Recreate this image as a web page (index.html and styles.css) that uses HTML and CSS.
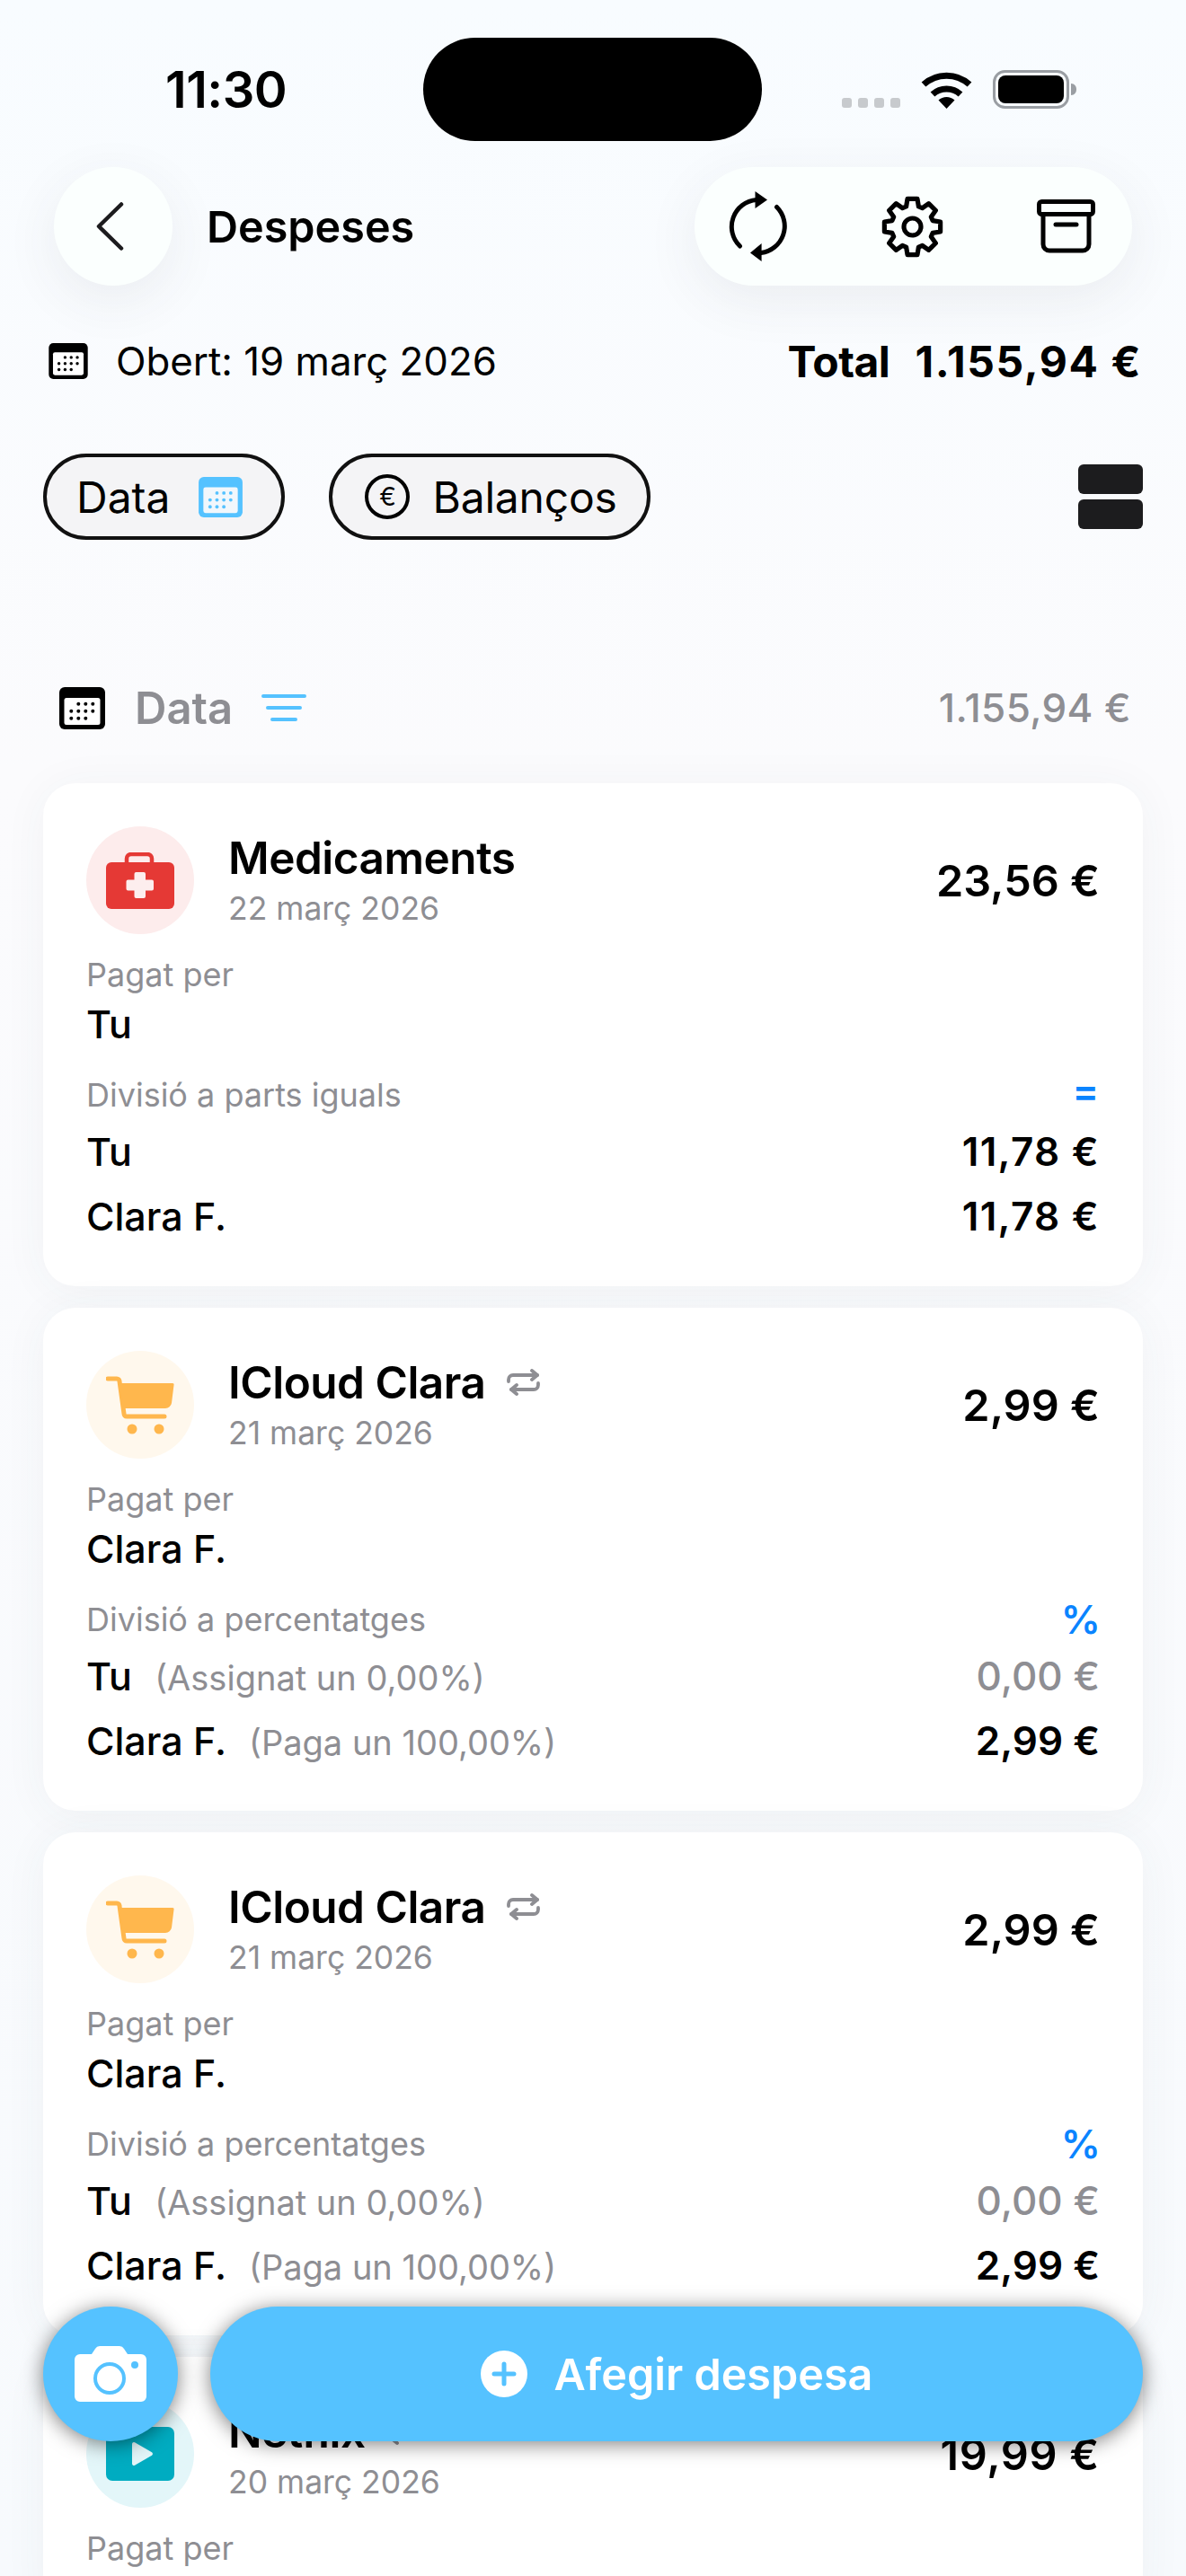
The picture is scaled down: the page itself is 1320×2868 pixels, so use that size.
FILE: index.html
```html
<!DOCTYPE html>
<html lang="ca">
<head>
  <meta charset="UTF-8" />
  <meta name="viewport" content="width=device-width, initial-scale=1.0"/>
  <title>Despeses</title>
  <link rel="stylesheet" href="styles.css">
</head>
<body>

<svg class="defs" width="0" height="0">
  <symbol id="cal" viewBox="0 0 51 47">
    <rect width="51" height="47" rx="6" fill="currentColor"/>
    <rect x="5.5" y="12" width="40" height="30" rx="2.5" fill="var(--panel)"/>
    <g fill="currentColor">
      <circle cx="21.3" cy="18.7" r="2"/><circle cx="29.3" cy="18.7" r="2"/><circle cx="37.3" cy="18.7" r="2"/>
      <circle cx="13.3" cy="26.7" r="2"/><circle cx="21.3" cy="26.7" r="2"/><circle cx="29.3" cy="26.7" r="2"/><circle cx="37.3" cy="26.7" r="2"/>
      <circle cx="13.3" cy="34.7" r="2"/><circle cx="21.3" cy="34.7" r="2"/><circle cx="29.3" cy="34.7" r="2"/>
    </g>
  </symbol>
  <symbol id="repeat" viewBox="0 0 39 30">
    <g fill="none" stroke="#8e8e93" stroke-width="3.800" stroke-linecap="round" stroke-linejoin="round">
      <path d="M3 14v-2a5 5 0 0 1 5-5h27"/>
      <path d="M29 2l6 5l-6 5"/>
      <path d="M36 16v2a5 5 0 0 1-5 5H6"/>
      <path d="M12 18l-6 5l6 5"/>
    </g>
  </symbol>
  <symbol id="cart" viewBox="0 0 76 65">
    <path d="M2 3h10a3 3 0 0 1 3 3l5 36a3 3 0 0 0 3 3h42" fill="none" stroke="#ffb74d" stroke-width="5" stroke-linecap="round" stroke-linejoin="round"/>
    <path d="M15 8h59a1.500 1.500 0 0 1 1.500 2l-2.500 20a7 7 0 0 1-7 6H20z" fill="#ffb74d"/>
    <circle cx="29" cy="59" r="5.500" fill="#ffb74d"/>
    <circle cx="59" cy="59" r="5.500" fill="#ffb74d"/>
  </symbol>
</svg>

<div class="screen">

  <div class="statusbar">
    <span class="time">11:30</span>
    <div class="island"></div>
    <div class="status-icons">
      <div class="signal"><i></i><i></i><i></i><i></i></div>
      <svg class="wifi" viewBox="0 0 57 42">
        <g fill="none" stroke="#000" stroke-width="7">
          <path d="M3 15 A 38 38 0 0 1 54 15"/>
          <path d="M13 26 A 23 23 0 0 1 44 26"/>
        </g>
        <path d="M28.500 42L19.500 32.500A 13 13 0 0 1 37.500 32.500Z" fill="#000"/>
      </svg>
      <svg class="battery" viewBox="0 0 93 43">
        <rect x="1.500" y="1.500" width="82" height="40" rx="12" fill="none" stroke="#9a9ea3" stroke-width="3"/>
        <rect x="6" y="6" width="73" height="31" rx="8" fill="#000"/>
        <path d="M87 15c4 0 6 3 6 6.500s-2 6.500-6 6.500z" fill="#9a9ea3"/>
      </svg>
    </div>
  </div>

  <header class="topbar">
    <button class="back">
      <svg viewBox="0 0 31 54" width="31" height="54"><path d="M28 2.500L3 27l25 24.500" fill="none" stroke="#1c1c1e" stroke-width="4.500" stroke-linecap="round" stroke-linejoin="round"/></svg>
    </button>
    <h1>Despeses</h1>
    <div class="actions">
      <svg viewBox="0 0 66 78" width="66" height="78">
        <g fill="none" stroke="#000" stroke-width="5" stroke-linecap="round">
          <path d="M12.500 61A30 30 0 0 1 31 9.500"/>
          <path d="M53.500 17.500A30 30 0 0 1 36 68.500"/>
        </g>
        <path d="M29.500 0L43 9.500L29.500 19zM24 68.600L36.600 58V78z" fill="#000"/>
      </svg>
      <svg viewBox="0 0 24 24" width="69" height="69">
        <path d="M9.600 4.160L10.090 1.170H13.910L14.400 4.160L15.850 4.760L18.310 2.990L21.010 5.690L19.240 8.150L19.840 9.600L22.830 10.090V13.910L19.840 14.400L19.240 15.850L21.010 18.310L18.310 21.010L15.850 19.240L14.400 19.840L13.910 22.830H10.090L9.600 19.840L8.150 19.240L5.690 21.010L2.990 18.310L4.760 15.850L4.160 14.400L1.170 13.910V10.090L4.160 9.600L4.760 8.150L2.990 5.690L5.690 2.990L8.150 4.760Z" fill="none" stroke="#000" stroke-width="1.800" stroke-linejoin="round"/>
        <circle cx="12" cy="12" r="3.300" fill="none" stroke="#000" stroke-width="1.800"/>
      </svg>
      <svg viewBox="0 0 65 60" width="65" height="60">
        <g fill="none" stroke="#000" stroke-width="5" stroke-linecap="round" stroke-linejoin="round">
          <rect x="2.500" y="2.500" width="60" height="14" rx="3"/>
          <path d="M7 17v33a7 7 0 0 0 7 7h37a7 7 0 0 0 7-7V17"/>
          <path d="M21 28h23"/>
        </g>
      </svg>
    </div>
  </header>

  <div class="summary">
    <div class="opened">
      <svg class="cal-black" width="44" height="40"><use href="#cal"/></svg>
      <span>Obert: 19 març 2026</span>
    </div>
    <div class="total"><span>Total</span><span class="total-value">1.155,94 €</span></div>
  </div>

  <div class="toolbar">
    <div class="chip chip-date">
      <span>Data</span>
      <svg class="cal-blue" width="49" height="45"><use href="#cal"/></svg>
    </div>
    <div class="chip chip-balance">
      <span class="euro">€</span>
      <span>Balanços</span>
    </div>
    <div class="layout-toggle"><i></i><i></i></div>
  </div>

  <div class="section">
    <svg class="cal-black" width="51" height="47"><use href="#cal"/></svg>
    <span class="section-title">Data</span>
    <svg class="filter" viewBox="0 0 50 32" width="50" height="32">
      <path d="M2 3h46M7 16h36M12 29h26" fill="none" stroke="#55c2ff" stroke-width="4" stroke-linecap="round"/>
    </svg>
    <span class="section-total">1.155,94 €</span>
  </div>

  <div class="cards">

    <article class="card">
      <div class="card-head">
        <div class="avatar avatar-red">
          <svg viewBox="0 0 76 63" width="76" height="63">
            <path d="M23 14V7a5 5 0 0 1 5-5h18a5 5 0 0 1 5 5v7" fill="none" stroke="#e53935" stroke-width="4.500"/>
            <rect y="11" width="76" height="52" rx="6" fill="#e53935"/>
            <path d="M31.500 24a2 2 0 0 1 2-2h8.500a2 2 0 0 1 2 2v6.500h7a2 2 0 0 1 2 2v8a2 2 0 0 1-2 2h-7v6.500a2 2 0 0 1-2 2h-8.500a2 2 0 0 1-2-2v-6.500h-7a2 2 0 0 1-2-2v-8a2 2 0 0 1 2-2h7z" fill="#fdeeee"/>
          </svg>
        </div>
        <div class="card-info">
          <div class="card-title">Medicaments</div>
          <div class="card-date">22 març 2026</div>
        </div>
        <div class="card-amount">23,56 €</div>
      </div>
      <div class="label">Pagat per</div>
      <div class="payer">Tu</div>
      <div class="label-row label"><span>Divisió a parts iguals</span><span class="mode mode-equal">=</span></div>
      <div class="split"><span>Tu</span><strong class="spaced">11,78 €</strong></div>
      <div class="split split-next"><span>Clara F.</span><strong class="spaced">11,78 €</strong></div>
    </article>

    <article class="card">
      <div class="card-head">
        <div class="avatar avatar-orange"><svg width="76" height="65"><use href="#cart"/></svg></div>
        <div class="card-info">
          <div class="card-title">ICloud Clara <svg class="repeat" width="39" height="30"><use href="#repeat"/></svg></div>
          <div class="card-date">21 març 2026</div>
        </div>
        <div class="card-amount">2,99 €</div>
      </div>
      <div class="label">Pagat per</div>
      <div class="payer">Clara F.</div>
      <div class="label-row label"><span>Divisió a percentatges</span><span class="mode">%</span></div>
      <div class="split"><span>Tu <em>(Assignat un 0,00%)</em></span><strong class="zero">0,00 €</strong></div>
      <div class="split split-next"><span>Clara F. <em>(Paga un 100,00%)</em></span><strong>2,99 €</strong></div>
    </article>

    <article class="card">
      <div class="card-head">
        <div class="avatar avatar-orange"><svg width="76" height="65"><use href="#cart"/></svg></div>
        <div class="card-info">
          <div class="card-title">ICloud Clara <svg class="repeat" width="39" height="30"><use href="#repeat"/></svg></div>
          <div class="card-date">21 març 2026</div>
        </div>
        <div class="card-amount">2,99 €</div>
      </div>
      <div class="label">Pagat per</div>
      <div class="payer">Clara F.</div>
      <div class="label-row label"><span>Divisió a percentatges</span><span class="mode">%</span></div>
      <div class="split"><span>Tu <em>(Assignat un 0,00%)</em></span><strong class="zero">0,00 €</strong></div>
      <div class="split split-next"><span>Clara F. <em>(Paga un 100,00%)</em></span><strong>2,99 €</strong></div>
    </article>

    <article class="card">
      <div class="card-head">
        <div class="avatar avatar-teal">
          <svg viewBox="0 0 76 60" width="76" height="60">
            <rect width="76" height="60" rx="7" fill="#00acc1"/>
            <path d="M29 19a2 2 0 0 1 3-1.700l19 11a2 2 0 0 1 0 3.400l-19 11a2 2 0 0 1-3-1.700z" fill="#e3f6f9"/>
          </svg>
        </div>
        <div class="card-info">
          <div class="card-title">Netflix <svg class="repeat" width="39" height="30"><use href="#repeat"/></svg></div>
          <div class="card-date">20 març 2026</div>
        </div>
        <div class="card-amount spaced">19,99 €</div>
      </div>
      <div class="label">Pagat per</div>
    </article>

  </div>

  <div class="bottom-actions">
    <button class="camera">
      <svg viewBox="0 0 80 62" width="80" height="62">
        <path d="M6 9h13l4-6a6 6 0 0 1 5-3h22a6 6 0 0 1 5 3l4 6h15a6 6 0 0 1 6 6v41a6 6 0 0 1-6 6H6a6 6 0 0 1-6-6V15a6 6 0 0 1 6-6z" fill="#fff"/>
        <circle cx="39" cy="36" r="16" fill="none" stroke="#55c2ff" stroke-width="4"/>
        <circle cx="67" cy="21" r="4" fill="#55c2ff"/>
      </svg>
    </button>
    <button class="add">
      <svg viewBox="0 0 52 52" width="52" height="52">
        <circle cx="26" cy="26" r="26" fill="#fff"/>
        <path d="M26 15v22M15 26h22" stroke="#55c2ff" stroke-width="5" stroke-linecap="round"/>
      </svg>
      <span>Afegir despesa</span>
    </button>
  </div>

</div>

</body>
</html>
```

FILE: styles.css
```css
:root {
  --blau: #55c2ff;
  --gris: #8e8e93;
  --mode: #0a84ff;
}

body {
  margin: 0;
  font-family: Inter, 'Noto Sans', sans-serif;
  color: #000;
}

.defs {
  position: absolute;
}

.screen {
  position: relative;
  width: 1320px;
  height: 2868px;
  overflow: hidden;
  background: linear-gradient(#f8fcff, #fbfbfd 30%, #f7fafd);
}

/* status bar */
.statusbar {
  display: flex;
  align-items: center;
  height: 115px;
  padding-top: 42px;
}

.time {
  width: 471px;
  padding-left: 184px;
  box-sizing: border-box;
  font-size: 56px;
  font-weight: 600;
  letter-spacing: -0.5px;
}

.island {
  width: 377px;
  height: 115px;
  border-radius: 58px;
  background: #000;
}

.status-icons {
  display: flex;
  align-items: flex-end;
  margin-left: 89px;
  height: 43px;
}

.signal {
  display: flex;
  gap: 7px;
  margin-bottom: 1px;
}

.signal i {
  width: 11px;
  height: 11px;
  border-radius: 3px;
  background: #c7cacd;
}

.wifi {
  width: 57px;
  height: 42px;
  margin-left: 23px;
}

.battery {
  width: 93px;
  height: 43px;
  margin-left: 23px;
}

/* header */
.topbar {
  display: flex;
  align-items: center;
  margin-top: 29px;
  padding: 0 60px;
}

.back {
  display: flex;
  align-items: center;
  justify-content: center;
  width: 132px;
  height: 132px;
  padding: 0 8px 0 0;
  border: none;
  border-radius: 50%;
  background: #fbfffe;
  box-shadow: 0 16px 60px rgba(60, 70, 80, 0.08);
}

.topbar h1 {
  margin: 0 0 0 38px;
  font-size: 48.5px;
  font-weight: 600;
}

.actions {
  display: flex;
  align-items: center;
  justify-content: space-between;
  box-sizing: border-box;
  width: 487px;
  height: 132px;
  margin-left: auto;
  padding: 0 41px 0 38px;
  border-radius: 66px;
  background: #fbfffe;
  box-shadow: 0 16px 60px rgba(60, 70, 80, 0.08);
}

/* summary */
.summary {
  display: flex;
  align-items: center;
  justify-content: space-between;
  height: 60px;
  margin-top: 54px;
  padding: 0 49px 0 54px;
}

.opened {
  display: flex;
  align-items: center;
  gap: 31px;
  font-size: 43.8px;
}

.cal-black {
  color: #000;
  --panel: #fff;
}

.cal-blue {
  color: var(--blau);
  --panel: #f1f7fc;
}

.total {
  display: flex;
  gap: 28px;
  font-size: 48px;
  font-weight: 700;
  letter-spacing: -0.5px;
}

.total-value {
  letter-spacing: 1.6px;
}

/* chips */
.toolbar {
  display: flex;
  align-items: center;
  gap: 49px;
  margin-top: 73px;
  padding: 0 48px;
}

.chip {
  display: flex;
  align-items: center;
  box-sizing: border-box;
  height: 96px;
  border: 4px solid #111;
  border-radius: 48px;
  background: #f4f4f6;
  font-size: 48px;
}

.chip-date {
  gap: 32px;
  padding: 0 43px 0 33px;
}

.chip-balance {
  gap: 25px;
  padding: 0 33px 0 36px;
  letter-spacing: -0.2px;
}

.euro {
  display: flex;
  align-items: center;
  justify-content: center;
  box-sizing: border-box;
  width: 50px;
  height: 50px;
  border: 4px solid #000;
  border-radius: 50%;
  font-size: 28px;
}

.layout-toggle {
  display: flex;
  flex-direction: column;
  gap: 6px;
  margin-left: auto;
}

.layout-toggle i {
  display: block;
  width: 72px;
  height: 33px;
  border-radius: 6px;
  background: #1c1c1e;
}

/* section */
.section {
  display: flex;
  align-items: center;
  height: 60px;
  margin-top: 157px;
  padding: 0 61px 0 66px;
}

.section-title {
  margin-left: 33px;
  font-size: 49px;
  font-weight: 600;
  color: var(--gris);
}

.filter {
  margin-left: 32px;
}

.section-total {
  margin-left: auto;
  font-size: 44px;
  font-weight: 500;
  letter-spacing: 0.4px;
  color: var(--gris);
}

/* cards */
.cards {
  display: flex;
  flex-direction: column;
  gap: 24px;
  margin-top: 54px;
  padding: 0 48px;
}

.card {
  padding: 48px 51px 52px 48px;
  border-radius: 36px;
  background: #fff;
  box-shadow: 0 4px 50px rgba(60, 70, 80, 0.05);
}

.card-head {
  display: flex;
  align-items: center;
  height: 120px;
  margin-bottom: 23px;
}

.avatar {
  display: flex;
  align-items: center;
  justify-content: center;
  flex-shrink: 0;
  width: 120px;
  height: 120px;
  border-radius: 50%;
}

.avatar-red { background: #fdecec; }
.avatar-orange { background: #fff8ed; }
.avatar-teal { background: #e3f6f9; }

.card-info {
  margin-left: 38px;
}

.card-title {
  display: flex;
  align-items: center;
  gap: 23px;
  height: 60px;
  font-size: 49.5px;
  font-weight: 600;
  letter-spacing: -0.5px;
}

.card-date {
  height: 46px;
  margin-top: 4px;
  line-height: 46px;
  font-size: 35.5px;
  color: var(--gris);
}

.card-amount {
  margin-left: auto;
  margin-right: -3px;
  font-size: 48.6px;
  font-weight: 600;
}

.card-amount.spaced {
  letter-spacing: 0.7px;
}

.label {
  height: 44px;
  line-height: 44px;
  font-size: 36px;
  color: var(--gris);
}

.payer {
  height: 52px;
  margin-top: 7px;
  line-height: 52px;
  font-size: 43px;
  font-weight: 500;
}

.label-row {
  display: flex;
  justify-content: space-between;
  margin-top: 31px;
}

.mode {
  margin-right: -4px;
  font-size: 44px;
  font-weight: 600;
  color: var(--mode);
}

.mode-equal {
  margin-top: -5px;
  margin-right: -2px;
}

.split {
  display: flex;
  justify-content: space-between;
  height: 52px;
  margin-top: 15px;
  line-height: 52px;
  font-size: 43px;
  font-weight: 500;
}

.split-next {
  margin-top: 20px;
}

.split strong {
  margin-right: -3px;
  font-size: 44px;
  font-weight: 600;
}

.split .spaced {
  letter-spacing: 1.3px;
}

.split em {
  margin-left: 14px;
  font-size: 38px;
  font-style: normal;
  font-weight: 400;
  color: var(--gris);
}

.split .zero {
  font-weight: 500;
  color: var(--gris);
}

/* floating buttons */
.bottom-actions {
  position: absolute;
  left: 48px;
  right: 48px;
  bottom: 150px;
  display: flex;
  gap: 36px;
}

.camera {
  display: flex;
  align-items: center;
  justify-content: center;
  flex-shrink: 0;
  width: 150px;
  height: 150px;
  padding: 0;
  border: none;
  border-radius: 50%;
  background: var(--blau);
  box-shadow: 0 3px 22px rgba(0, 0, 0, 0.5);
}

.add {
  display: flex;
  flex: 1;
  align-items: center;
  justify-content: center;
  gap: 30px;
  height: 150px;
  padding: 0;
  border: none;
  border-radius: 75px;
  background: var(--blau);
  color: #fff;
  font-family: inherit;
  font-size: 48.5px;
  font-weight: 600;
  box-shadow: 0 3px 22px rgba(0, 0, 0, 0.5);
}
```
